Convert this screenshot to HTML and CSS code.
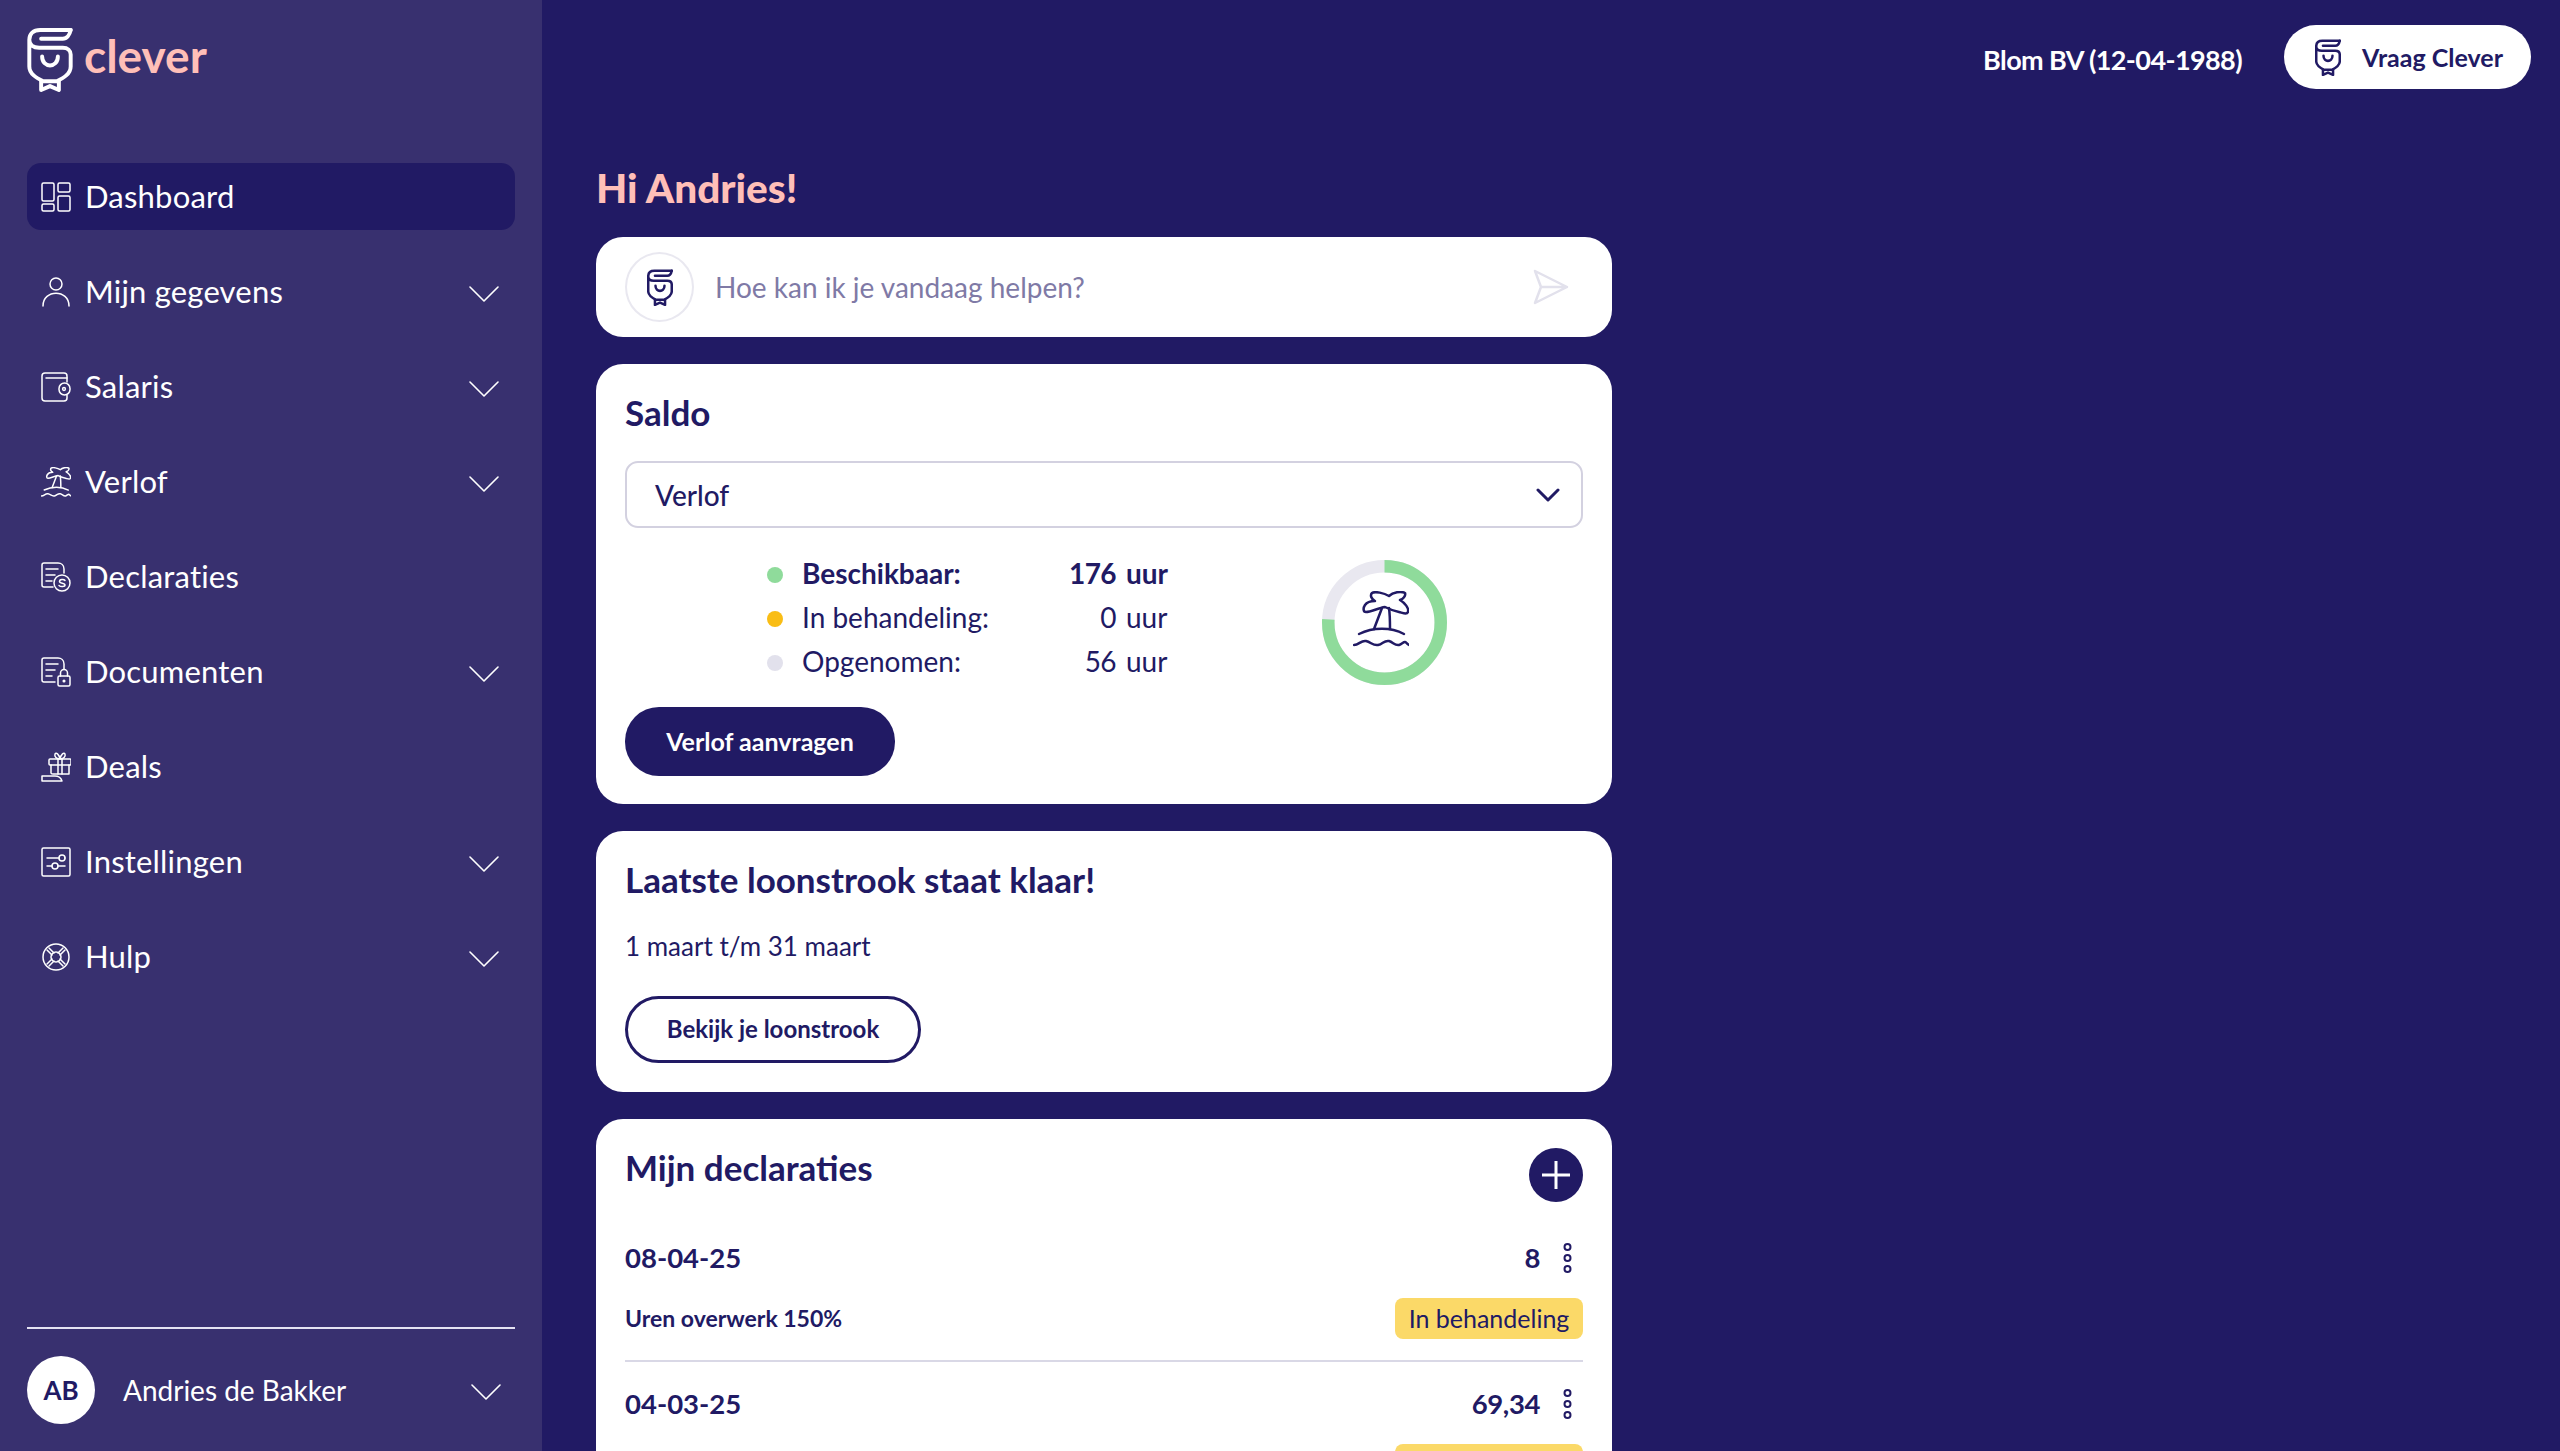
FILE: index.html
```html
<!DOCTYPE html>
<html lang="nl">
<head>
    <meta charset="UTF-8">
    <meta name="viewport" content="width=device-width, initial-scale=1.0">
    <title>Clever - Dashboard</title>
    <link rel="stylesheet" href="styles.css">
</head>
<body>
    <svg class="sprites" xmlns="http://www.w3.org/2000/svg">
        <symbol id="i-clever" viewBox="0 0 46 66">
            <path d="M44 3H13C6 3 2 7 2 13V40C2 48 10 52 16 55H30C36 52 44 48 44 40V28C44 24 41 21 36 21H12C6 21 2 18 2 13"/>
            <path d="M44 3C43 8 40 12 36 12H14"/>
            <path d="M15 30C15 42 31 42 31 30"/>
            <path d="M14 55V64L23 60L32 64V55"/>
        </symbol>
        <symbol id="i-palm" viewBox="0 0 56 56">
            <path d="M32 16C25 17 18 21 13 21C10 21 10 17 12 14C14 11 18 10 22 10C18 8 17 4 19 2C22 0 31 2 36 5C40 1 48 0 52 2C53 5 50 8 47 9C52 12 56 17 55 21C54 24 50 22 46 21C41 20 36 18 32 16Z"/>
            <path d="M29 17L21 38M36 17C37 24 37 31 37 38"/>
            <path d="M6 43C20 36 38 36 51 43"/>
            <path d="M1 54C6 54 8 49 13 50C18 51 20 55 25 54C30 53 31 49 36 50C40 51 42 55 46 54C49 53 50 51 52 51C53 51 54 53 56 54"/>
        </symbol>
        <symbol id="i-chevron" viewBox="0 0 30 16">
            <path d="M1 1L15 15L29 1"/>
        </symbol>
    </svg>

    <aside class="sidebar">
        <div class="logo">
            <svg class="logo-mark"><use href="#i-clever"/></svg>
            <span class="logo-text">clever</span>
        </div>

        <nav class="nav">
            <a class="nav-item active">
                <svg class="nav-icon" viewBox="0 0 30 30"><rect x="1" y="1" width="12" height="18" rx="1.5"/><rect x="17" y="1" width="12" height="9" rx="1.5"/><rect x="1" y="22" width="12" height="7" rx="1.5"/><rect x="17" y="14" width="12" height="15" rx="1.5"/></svg>
                <span>Dashboard</span>
            </a>
            <a class="nav-item">
                <svg class="nav-icon" viewBox="0 0 30 30"><circle cx="15" cy="7" r="6"/><path d="M2 29C2 12 28 12 28 29"/></svg>
                <span>Mijn gegevens</span>
                <svg class="chevron"><use href="#i-chevron"/></svg>
            </a>
            <a class="nav-item">
                <svg class="nav-icon" viewBox="0 0 30 30"><path d="M26 10V4C26 2 25 1 23 1H4C2 1 1 2 1 4V26C1 28 2 29 4 29H23C25 29 26 28 26 26V23"/><path d="M5 6H26"/><rect x="18" y="11" width="11" height="12" rx="5.5"/><circle cx="23" cy="17" r="1.4"/></svg>
                <span>Salaris</span>
                <svg class="chevron"><use href="#i-chevron"/></svg>
            </a>
            <a class="nav-item">
                <svg class="nav-icon palm"><use href="#i-palm"/></svg>
                <span>Verlof</span>
                <svg class="chevron"><use href="#i-chevron"/></svg>
            </a>
            <a class="nav-item">
                <svg class="nav-icon" viewBox="0 0 30 30"><path d="M23 11V7C23 3 20 1 17 1H3C2 1 1 2 1 3V23C1 24 2 25 3 25H12"/><path d="M5 7H17M5 13H14M5 19H11"/><circle cx="21" cy="21" r="8"/><path d="M24 18.500C23 17 18.500 17 18.500 19.500C18.500 22 24 20.500 24 23C24 25 19.500 25 18 23.500"/></svg>
                <span>Declaraties</span>
            </a>
            <a class="nav-item">
                <svg class="nav-icon" viewBox="0 0 30 30"><path d="M23 12V7C23 3 20 1 17 1H3C2 1 1 2 1 3V23C1 24 2 25 3 25H14"/><path d="M5 7H17M5 13H14M5 19H11"/><rect x="17" y="19" width="12" height="10" rx="1.5"/><path d="M19.500 19V16A3.500 3.500 0 0 1 26.500 16V19"/><circle cx="23" cy="24" r=".8"/></svg>
                <span>Documenten</span>
                <svg class="chevron"><use href="#i-chevron"/></svg>
            </a>
            <a class="nav-item">
                <svg class="nav-icon" viewBox="0 0 30 30"><rect x="8" y="7" width="22" height="6" rx="1"/><path d="M10 13V21C10 22 11 22 12 22H28V13"/><path d="M17 7V22M21 7V22"/><path d="M19 7C16 7 13 5 14 2C15 0 18 2 19 7C20 2 23 0 24 2C25 5 22 7 19 7Z"/><path d="M1 29V24H14C17 24 20 26 21 29Z"/></svg>
                <span>Deals</span>
            </a>
            <a class="nav-item">
                <svg class="nav-icon" viewBox="0 0 30 30"><rect x="1" y="1" width="28" height="28" rx="1.500"/><path d="M6 11H18M6 19H11M17 19H24M24 11H24"/><circle cx="21" cy="11" r="3"/><circle cx="14" cy="19" r="3"/></svg>
                <span>Instellingen</span>
                <svg class="chevron"><use href="#i-chevron"/></svg>
            </a>
            <a class="nav-item">
                <svg class="nav-icon" viewBox="0 0 30 30"><circle cx="15" cy="15" r="13"/><circle cx="15" cy="15" r="5"/><path d="M6 8L11 13M8 6L13 11M22 6L17 11M24 8L19 13M6 22L11 17M8 24L13 19M22 24L17 19M24 22L19 17"/></svg>
                <span>Hulp</span>
                <svg class="chevron"><use href="#i-chevron"/></svg>
            </a>
        </nav>

        <div class="user">
            <div class="avatar">AB</div>
            <span class="user-name">Andries de Bakker</span>
            <svg class="chevron"><use href="#i-chevron"/></svg>
        </div>
    </aside>

    <main class="main">
        <header class="topbar">
            <span class="company">Blom BV (12-04-1988)</span>
            <button class="ask-btn">
                <svg class="clever-small"><use href="#i-clever"/></svg>
                Vraag Clever
            </button>
        </header>

        <div class="content">
            <h1 class="greeting">Hi Andries!</h1>

            <div class="cards">
                <section class="card chat">
                    <div class="chat-avatar"><svg class="clever-small"><use href="#i-clever"/></svg></div>
                    <span class="chat-placeholder">Hoe kan ik je vandaag helpen?</span>
                    <svg class="send" viewBox="0 0 36 36"><path d="M2 2L34 18L2 34L8 18ZM8 18H34"/></svg>
                </section>

                <section class="card saldo">
                    <h2 class="card-title">Saldo</h2>
                    <div class="select">
                        <span>Verlof</span>
                        <svg class="select-arrow" viewBox="0 0 24 14"><path d="M2 2L12 12L22 2"/></svg>
                    </div>
                    <div class="balance">
                        <div class="balance-list">
                            <div class="balance-row strong">
                                <i class="dot green"></i><span>Beschikbaar:</span><span class="amount">176</span><span class="unit">uur</span>
                            </div>
                            <div class="balance-row">
                                <i class="dot yellow"></i><span>In behandeling:</span><span class="amount">0</span><span class="unit">uur</span>
                            </div>
                            <div class="balance-row">
                                <i class="dot grey"></i><span>Opgenomen:</span><span class="amount">56</span><span class="unit">uur</span>
                            </div>
                        </div>
                        <div class="donut">
                            <svg class="donut-ring" viewBox="0 0 125 125"><circle class="ring-bg" cx="62.5" cy="62.5" r="56.250"/><circle class="ring-fill" cx="62.5" cy="62.5" r="56.250" pathLength="100" stroke-dasharray="75.900 100" transform="rotate(-90 62.5 62.5)"/></svg>
                            <svg class="donut-palm"><use href="#i-palm"/></svg>
                        </div>
                    </div>
                    <button class="btn btn-solid">Verlof aanvragen</button>
                </section>

                <section class="card payslip">
                    <h2 class="card-title">Laatste loonstrook staat klaar!</h2>
                    <p class="payslip-period">1 maart t/m 31 maart</p>
                    <button class="btn btn-outline">Bekijk je loonstrook</button>
                </section>

                <section class="card claims">
                    <div class="claims-head">
                        <h2 class="card-title">Mijn declaraties</h2>
                        <button class="add-btn"><svg viewBox="0 0 30 30"><path d="M15 1V29M1 15H29"/></svg></button>
                    </div>
                    <div class="claim">
                        <div class="claim-top">
                            <span class="claim-date">08-04-25</span>
                            <span class="claim-value">8</span>
                            <svg class="kebab" viewBox="0 0 9 30"><circle cx="4.5" cy="4" r="3"/><circle cx="4.5" cy="15" r="3"/><circle cx="4.5" cy="26" r="3"/></svg>
                        </div>
                        <div class="claim-bottom">
                            <span class="claim-type">Uren overwerk 150%</span>
                            <span class="badge">In behandeling</span>
                        </div>
                    </div>
                    <div class="claim">
                        <div class="claim-top">
                            <span class="claim-date">04-03-25</span>
                            <span class="claim-value">69,34</span>
                            <svg class="kebab" viewBox="0 0 9 30"><circle cx="4.5" cy="4" r="3"/><circle cx="4.5" cy="15" r="3"/><circle cx="4.5" cy="26" r="3"/></svg>
                        </div>
                        <div class="claim-bottom">
                            <span class="claim-type"></span>
                            <span class="badge">In behandeling</span>
                        </div>
                    </div>
                </section>
            </div>
        </div>
    </main>
</body>
</html>
```

FILE: styles.css
```css
* {
    box-sizing: border-box;
}
body {
    font-family: Lato, 'Noto Sans', sans-serif;
    display: flex;
    height: 100vh;
    margin: 0;
    overflow: hidden;
    background-color: #211a64;
    color: #211a64;
}
svg {
    fill: none;
    stroke: currentColor;
    stroke-linecap: round;
    stroke-linejoin: round;
}
.sprites {
    display: none;
}

/* sidebar */
.sidebar {
    display: flex;
    flex-direction: column;
    flex: none;
    width: 542px;
    padding: 27px;
    background-color: #38306f;
    color: white;
}
.logo {
    display: flex;
    align-items: center;
    gap: 11px;
    height: 65px;
}
.logo-mark {
    width: 46px;
    height: 65px;
    stroke-width: 4;
}
.logo-text {
    font-size: 46px;
    font-weight: 700;
    color: #ffbfb8;
    margin-top: -8px;
}
.nav {
    display: flex;
    flex-direction: column;
    gap: 28px;
    margin-top: 71px;
}
.nav-item {
    display: flex;
    align-items: center;
    gap: 14px;
    height: 67px;
    padding: 0 16px 0 14px;
    border-radius: 14px;
    font-size: 31px;
    letter-spacing: .2px;
}
.nav-item span {
    margin-top: -1px;
}
.nav-item.active {
    background-color: #211a64;
}
.nav-icon {
    flex: none;
    width: 30px;
    height: 30px;
    stroke-width: 1.5;
}
.nav-icon.palm {
    stroke-width: 2.8;
}
.chevron {
    flex: none;
    width: 30px;
    height: 16px;
    margin-left: auto;
    margin-top: 4px;
    stroke-width: 1.6;
}
.user {
    display: flex;
    align-items: center;
    gap: 28px;
    margin-top: auto;
    padding: 27px 14px 0 0;
    border-top: 2px solid #e4e2f2;
    font-size: 28px;
}
.avatar {
    display: flex;
    align-items: center;
    justify-content: center;
    flex: none;
    width: 68px;
    height: 68px;
    border-radius: 50%;
    background-color: white;
    color: #211a64;
    font-size: 26px;
    font-weight: 700;
}

/* main */
.main {
    flex: 1;
    min-width: 0;
    padding: 25px 29px 0 54px;
}
.topbar {
    display: flex;
    align-items: center;
    justify-content: flex-end;
    gap: 42px;
    height: 64px;
}
.company {
    margin-top: 5px;
    color: white;
    font-size: 27px;
    font-weight: 700;
    letter-spacing: -.6px;
}
.ask-btn {
    display: flex;
    align-items: center;
    gap: 21px;
    height: 64px;
    padding: 0 28px 0 31px;
    border: none;
    border-radius: 32px;
    background-color: white;
    color: #211a64;
    font-family: inherit;
    font-size: 25px;
    font-weight: 700;
}
.clever-small {
    flex: none;
    width: 26px;
    height: 37px;
    stroke-width: 4.5;
}
.content {
    width: 1016px;
}
.greeting {
    margin: 74px 0 24px;
    font-size: 40.500px;
    line-height: 50px;
    font-weight: 900;
    color: #ffbfb8;
}
.cards {
    display: flex;
    flex-direction: column;
    gap: 27px;
}
.card {
    border-radius: 27px;
    background-color: white;
    padding: 30px 29px 29px;
}
.card-title {
    margin: -2px 0 0;
    font-size: 35px;
    line-height: 40px;
    font-weight: 700;
}

/* chat */
.chat {
    display: flex;
    align-items: center;
    height: 100px;
    padding: 0 43px 0 29px;
}
.chat-avatar {
    display: flex;
    align-items: center;
    justify-content: center;
    flex: none;
    width: 69px;
    height: 70px;
    border: 2px solid #e9e8f0;
    border-radius: 50%;
}
.chat-placeholder {
    margin-left: 21px;
    font-size: 28px;
    color: #7f7aa6;
}
.send {
    width: 36px;
    height: 36px;
    margin-left: auto;
    stroke: #e2e1ec;
    stroke-width: 2.5;
}

/* saldo */
.saldo {
    padding-bottom: 28px;
}
.select {
    display: flex;
    align-items: center;
    justify-content: space-between;
    height: 67px;
    margin-top: 29px;
    padding: 0 21px 0 28px;
    border: 2px solid #d3d1e0;
    border-radius: 13px;
    font-size: 28px;
    font-weight: 500;
}
.select-arrow {
    width: 24px;
    height: 14px;
    stroke-width: 3;
}
.balance {
    display: flex;
    margin: 23px 0 22px;
}
.balance-list {
    width: 400px;
    margin-left: 142px;
}
.balance-row {
    display: grid;
    grid-template-columns: 35px 198px 116px 51px;
    align-items: center;
    height: 44px;
    font-size: 28px;
}
.balance-row.strong {
    font-weight: 700;
}
.amount {
    text-align: right;
    letter-spacing: -.6px;
}
.unit {
    margin-left: 10px;
}
.dot {
    width: 16px;
    height: 16px;
    margin-top: 4px;
    border-radius: 50%;
}
.dot.green {
    background-color: #8fdb9b;
}
.dot.yellow {
    background-color: #f9bd15;
}
.dot.grey {
    background-color: #e2e1ec;
}
.donut {
    position: relative;
    flex: none;
    width: 125px;
    height: 125px;
    margin: 9px 0 0 154.500px;
}
.donut-ring {
    display: block;
    width: 125px;
    height: 125px;
}
.ring-bg {
    stroke: #e9e8f0;
    stroke-width: 12.500;
}
.ring-fill {
    stroke: #8fdb9b;
    stroke-width: 12.500;
    stroke-linecap: butt;
}
.donut-palm {
    position: absolute;
    top: 31px;
    left: 31px;
    width: 56px;
    height: 56px;
    stroke-width: 2.5;
}
.btn {
    display: block;
    padding: 0 0 2px;
    border-radius: 34px;
    font-family: inherit;
    font-size: 24px;
    font-weight: 700;
}
.btn-solid {
    width: 270px;
    height: 69px;
    border: none;
    background-color: #211a64;
    color: white;
    font-size: 25px;
}
.btn-outline {
    width: 296px;
    height: 67px;
    border: 3px solid #211a64;
    background-color: white;
    color: #211a64;
}

/* loonstrook */
.payslip-period {
    margin: 30px 0 33px;
    font-size: 26px;
    line-height: 34px;
}

/* declaraties */
.claims {
    padding-top: 29px;
}
.claims-head {
    display: flex;
    justify-content: space-between;
    height: 54px;
    padding-top: 1px;
}
.add-btn {
    display: flex;
    align-items: center;
    justify-content: center;
    flex: none;
    width: 54px;
    height: 54px;
    margin-top: -1px;
    padding: 0;
    border: none;
    border-radius: 50%;
    background-color: #211a64;
    color: white;
}
.add-btn svg {
    width: 30px;
    height: 30px;
    stroke-width: 3;
    stroke-linecap: butt;
}
.claim {
    padding-top: 24px;
}
.claims-head + .claim {
    margin-top: 14px;
    padding-bottom: 21px;
    border-bottom: 2px solid #d9d8e6;
}
.claim-top {
    display: flex;
    align-items: center;
    height: 36px;
    padding-bottom: 2px;
    font-size: 27.500px;
    font-weight: 700;
}
.claim-date {
    margin-right: auto;
}
.claim-value {
    letter-spacing: -.4px;
}
.kebab {
    flex: none;
    width: 9px;
    height: 30px;
    margin: 2px 11px 0 23px;
    stroke-width: 2;
}
.claim-bottom {
    display: flex;
    align-items: center;
    justify-content: space-between;
    margin-top: 22px;
}
.claim-type {
    padding-bottom: 2px;
    font-size: 23px;
    font-weight: 700;
}
.badge {
    display: flex;
    align-items: center;
    justify-content: center;
    width: 188px;
    height: 41px;
    padding-bottom: 2px;
    border-radius: 8px;
    background-color: #fbd968;
    font-size: 25px;
}
```
